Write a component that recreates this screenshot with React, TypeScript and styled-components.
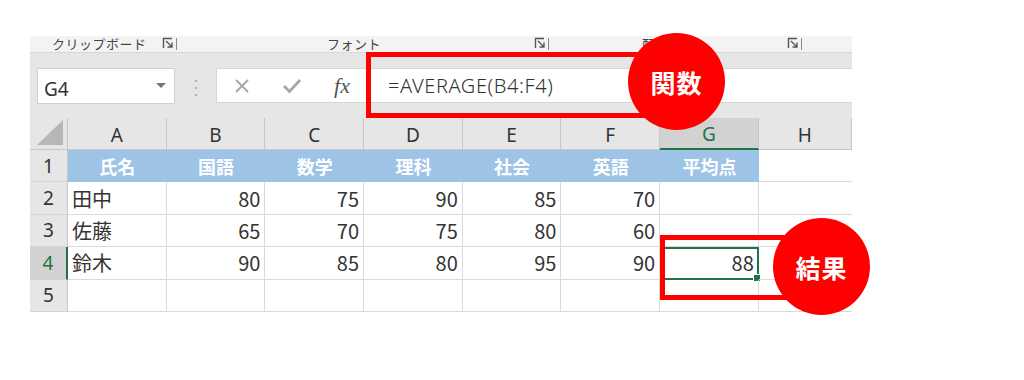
import styled, { createGlobalStyle } from "styled-components";

const GlobalStyle = createGlobalStyle`
  body {
    margin: 0;
    background: #ffffff;
    font-family: "Noto Sans CJK JP", "Noto Sans", sans-serif;
  }
`;

const COL_W = 98.7;
const ROW_H = 32.4;

const columns = ["A", "B", "C", "D", "E", "F", "G", "H"];
const headers = ["氏名", "国語", "数学", "理科", "社会", "英語", "平均点"];
const rows: (string | number)[][] = [
  ["田中", 80, 75, 90, 85, 70, ""],
  ["佐藤", 65, 70, 75, 80, 60, ""],
  ["鈴木", 90, 85, 80, 95, 90, 88],
  ["", "", "", "", "", "", ""],
];

function Launcher() {
  return (
    <svg width="16" height="14" viewBox="0 0 16 14">
      <path d="M1.5 11 V1.5 H10" stroke="#555" strokeWidth="1.4" fill="none" />
      <path d="M4 4 L10 10 M10 5.5 V10 H5.5" stroke="#555" strokeWidth="1.4" fill="none" />
      <path d="M14.5 1 V13" stroke="#888" strokeWidth="1" />
    </svg>
  );
}

function App() {
  return (
    <>
      <GlobalStyle />
      <Page>
        <Shot>
          <Ribbon>
            <Slot $w={132} $pl={22}>
              <RibbonLabel>クリップボード</RibbonLabel>
            </Slot>
            <Slot $w={165}>
              <Launcher />
            </Slot>
            <Slot $w={207}>
              <RibbonLabel>フォント</RibbonLabel>
            </Slot>
            <Slot $w={108}>
              <Launcher />
            </Slot>
            <Slot $w={145}>
              <RibbonLabel>配置</RibbonLabel>
            </Slot>
            <Slot $w={40}>
              <Launcher />
            </Slot>
          </Ribbon>

          <FormulaBar>
            <NameBox>
              <span>G4</span>
              <DropArrow />
            </NameBox>
            <Dots>⋮</Dots>
            <FormulaBox>
              <ToolIcon>
                <svg width="20" height="20" viewBox="0 0 20 20">
                  <path d="M4 4 L16 16 M16 4 L4 16" stroke="#a6a6a6" strokeWidth="1.8" fill="none" />
                </svg>
              </ToolIcon>
              <ToolIcon>
                <svg width="22" height="20" viewBox="0 0 22 20">
                  <path d="M3 10 L8.5 15.5 L19 4" stroke="#a6a6a6" strokeWidth="2.8" fill="none" />
                </svg>
              </ToolIcon>
              <Fx>fx</Fx>
              <FormulaText>=AVERAGE(B4:F4)</FormulaText>
            </FormulaBox>
          </FormulaBar>

          <Sheet>
            <Corner>
              <svg width="28" height="27" viewBox="0 0 28 27">
                <path d="M26 0 L26 25 L0 25 Z" fill="#b7b7b7" />
              </svg>
            </Corner>
            {columns.map((c) => (
              <ColHead key={c} $active={c === "G"}>
                {c}
              </ColHead>
            ))}

            <RowHead>1</RowHead>
            {headers.map((h) => (
              <TitleCell key={h}>{h}</TitleCell>
            ))}
            <Cell />

            {rows.map((r, i) => (
              <Row key={i} n={i + 2} values={r} />
            ))}
          </Sheet>

          <RedFrame $x={336} $y={16} $w={330} $h={66} />
          <RedFrame $x={630} $y={199} $w={150} $h={65} />
          <Badge $x={598} $y={-3}>関数</Badge>
          <Badge $x={743} $y={182}>結果</Badge>
        </Shot>
      </Page>
    </>
  );
}

function Row({ n, values }: { n: number; values: (string | number)[] }) {
  return (
    <>
      <RowHead $active={n === 4}>{n}</RowHead>
      {values.map((v, j) => (
        <Cell key={j} $num={typeof v === "number"} $selected={n === 4 && j === 6}>
          {v}
          {n === 4 && j === 6 && <Handle />}
        </Cell>
      ))}
      <Cell />
    </>
  );
}

export default App;

const Page = styled.div`
  padding: 36px 0 0 30px;
  height: 344px;
`;

const Shot = styled.div`
  position: relative;
  width: 822px;
  background: #e6e6e6;
`;

const Ribbon = styled.div`
  display: flex;
  align-items: center;
  height: 16px;
  background: #f3f3f3;
  border-bottom: 1px solid #d6d6d6;
`;

const Slot = styled.div<{ $w: number; $pl?: number }>`
  display: flex;
  align-items: center;
  flex: none;
  width: ${(p) => p.$w}px;
  padding-left: ${(p) => p.$pl ?? 0}px;
  box-sizing: border-box;
`;

const RibbonLabel = styled.span`
  font-size: 13px;
  line-height: 16px;
  color: #444;
  letter-spacing: 0.5px;
`;

const FormulaBar = styled.div`
  display: flex;
  align-items: center;
  height: 65px;
  padding-left: 7px;
`;

const NameBox = styled.div`
  display: flex;
  align-items: center;
  justify-content: space-between;
  box-sizing: border-box;
  width: 138px;
  height: 36px;
  padding: 0 8px 0 6px;
  background: #fff;
  border: 1px solid #d0d0d0;
  font-family: "Noto Sans", sans-serif;
  font-size: 19px;
  color: #333;
  span {
    padding-top: 6px;
  }
`;

const DropArrow = styled.span`
  width: 0;
  height: 0;
  border-left: 5px solid transparent;
  border-right: 5px solid transparent;
  border-top: 5px solid #777;
  padding: 0 !important;
`;

const Dots = styled.span`
  width: 41px;
  text-align: center;
  color: #b0b0b0;
  font-size: 20px;
`;

const FormulaBox = styled.div`
  display: flex;
  align-items: center;
  flex: 1;
  height: 35px;
  background: #fff;
  border: 1px solid #d6d6d6;
  border-right: none;
  box-sizing: border-box;
`;

const ToolIcon = styled.span`
  display: flex;
  justify-content: center;
  width: 50px;
`;

const Fx = styled.span`
  width: 50px;
  text-align: center;
  font-family: "Liberation Serif", "DejaVu Serif", serif;
  font-style: italic;
  font-size: 22px;
  color: #555;
`;

const FormulaText = styled.span`
  margin-left: 21px;
  font-family: "Noto Sans", sans-serif;
  font-size: 20px;
  font-weight: 300;
  color: #333;
  letter-spacing: 0.6px;
`;

const Sheet = styled.div`
  display: grid;
  grid-template-columns: 38px repeat(7, ${COL_W}px) 1fr;
  grid-template-rows: 32px repeat(5, ${ROW_H}px);
  background: #fff;
`;

const Corner = styled.div`
  display: flex;
  align-items: flex-end;
  justify-content: flex-end;
  padding: 0 2px 2px 0;
  background: #e6e6e6;
  border-right: 1px solid #c6c6c6;
  border-bottom: 1px solid #c6c6c6;
  box-sizing: border-box;
`;

const ColHead = styled.div<{ $active?: boolean }>`
  display: flex;
  align-items: center;
  justify-content: center;
  box-sizing: border-box;
  background: ${(p) => (p.$active ? "#d2d2d2" : "#e6e6e6")};
  border-right: 1px solid #c6c6c6;
  border-bottom: ${(p) => (p.$active ? "2px solid #217346" : "1px solid #c6c6c6")};
  color: ${(p) => (p.$active ? "#217346" : "#333")};
  font-family: "Noto Sans", sans-serif;
  font-size: 19px;
  padding-top: 2px;
  &:last-of-type {
    border-right: none;
  }
`;

const RowHead = styled.div<{ $active?: boolean }>`
  display: flex;
  align-items: center;
  justify-content: center;
  box-sizing: border-box;
  background: ${(p) => (p.$active ? "#d2d2d2" : "#e6e6e6")};
  border-right: ${(p) => (p.$active ? "2px solid #217346" : "1px solid #c6c6c6")};
  border-bottom: 1px solid #d4d4d4;
  color: ${(p) => (p.$active ? "#217346" : "#333")};
  font-family: "Noto Sans", sans-serif;
  font-size: 19px;
`;

const TitleCell = styled.div`
  display: flex;
  align-items: center;
  justify-content: center;
  background: #9dc3e6;
  color: #fff;
  font-size: 18px;
  font-weight: 700;
`;

const Cell = styled.div<{ $num?: boolean; $selected?: boolean }>`
  position: relative;
  display: flex;
  align-items: center;
  justify-content: ${(p) => (p.$num ? "flex-end" : "flex-start")};
  box-sizing: border-box;
  padding: 0 4px;
  border-right: 1px solid #dadada;
  border-bottom: 1px solid #dadada;
  font-size: 20px;
  color: #333;
  outline: ${(p) => (p.$selected ? "2px solid #217346" : "none")};
  outline-offset: -2px;
  &:nth-child(9n) {
    border-right: none;
  }
`;

const Handle = styled.span`
  position: absolute;
  right: -3px;
  bottom: -3px;
  width: 6px;
  height: 6px;
  background: #217346;
  border: 1px solid #fff;
`;

const RedFrame = styled.div<{ $x: number; $y: number; $w: number; $h: number }>`
  position: absolute;
  left: ${(p) => p.$x}px;
  top: ${(p) => p.$y}px;
  width: ${(p) => p.$w}px;
  height: ${(p) => p.$h}px;
  box-sizing: border-box;
  border: 5px solid #ff0000;
`;

const Badge = styled.div<{ $x: number; $y: number }>`
  position: absolute;
  left: ${(p) => p.$x}px;
  top: ${(p) => p.$y}px;
  width: 97px;
  height: 97px;
  border-radius: 50%;
  background: #ff0000;
  display: flex;
  align-items: center;
  justify-content: center;
  color: #fff;
  font-size: 25px;
  font-weight: 700;
  letter-spacing: 1px;
`;
